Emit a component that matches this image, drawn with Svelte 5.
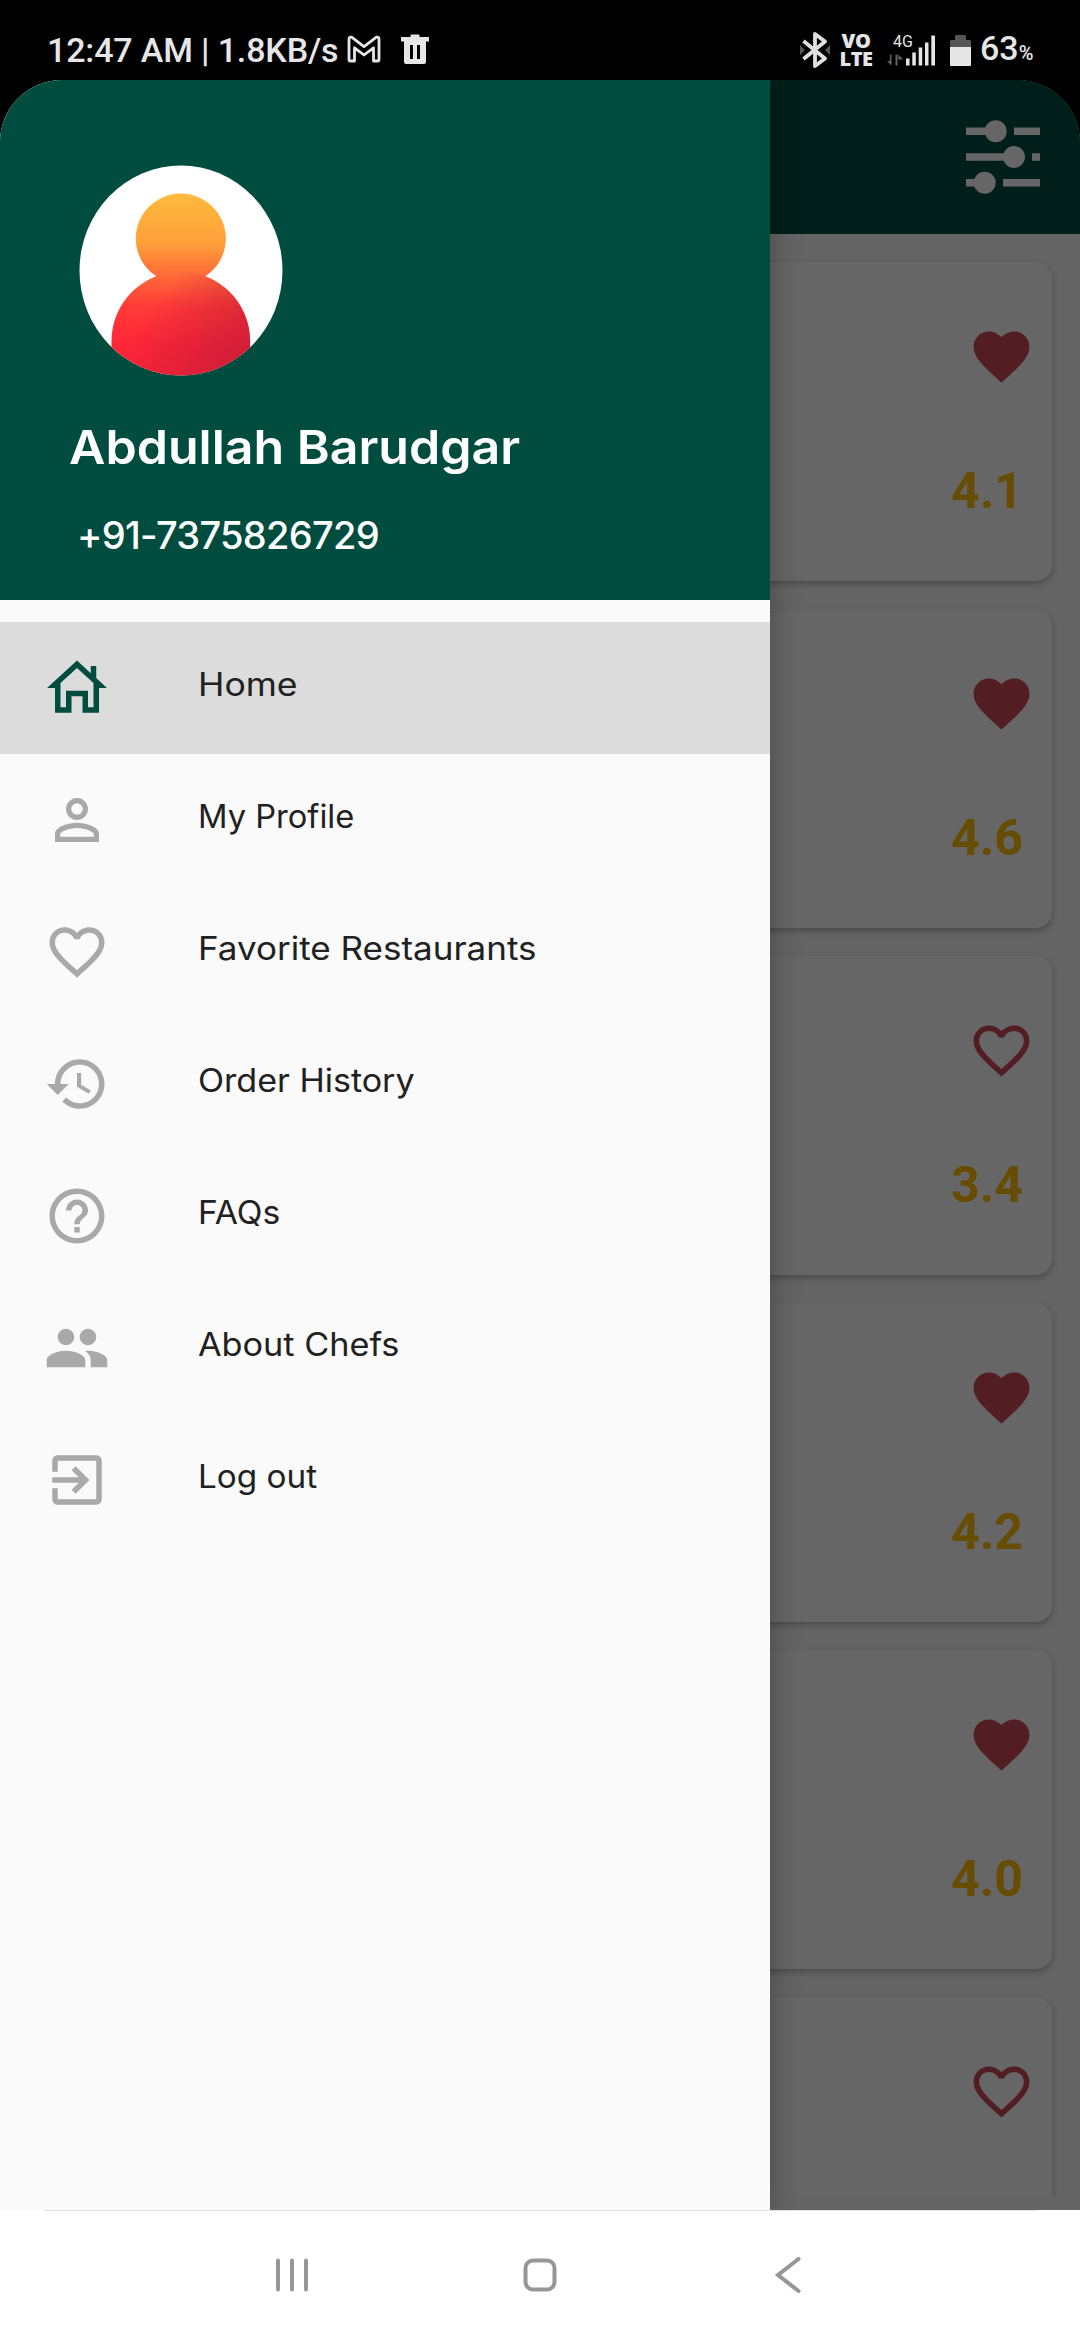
<script>
  const HEART_OUTLINE = 'M16.5 3c-1.74 0-3.41.81-4.5 2.09C10.91 3.81 9.24 3 7.5 3 4.42 3 2 5.42 2 8.5c0 3.78 3.4 6.86 8.55 11.54L12 21.35l1.45-1.32C18.6 15.36 22 12.28 22 8.5 22 5.42 19.58 3 16.5 3zm-4.4 15.55l-.1.1-.1-.1C7.14 14.24 4 11.39 4 8.5 4 6.5 5.5 5 7.5 5c1.54 0 3.04.99 3.57 2.36h1.87C13.46 5.99 14.96 5 16.5 5c2 0 3.5 1.5 3.5 3.5 0 2.89-3.14 5.74-7.9 10.05z';
  const HEART = 'M12 21.35l-1.45-1.32C5.4 15.36 2 12.28 2 8.5 2 5.42 4.42 3 7.5 3c1.74 0 3.41.81 4.5 2.09C13.09 3.81 14.76 3 16.5 3 19.58 3 22 5.42 22 8.5c0 3.78-3.4 6.86-8.55 11.54L12 21.35z';

  // `stretch` widens each label's letterforms horizontally
  const menu = [
    { label: 'Home', stretch: 1.11, active: true, icon: 'M12 2 1.1 12H4v9h6v-6h4v6h6v-9h2.9L19 8.4V4h-2v2.6zM12 4.7l6 5.45V19h-2v-6H8v6H6v-8.85z' },
    { label: 'My Profile', stretch: 1.02, icon: 'M12 5.9a2.1 2.1 0 110 4.2 2.1 2.1 0 010-4.2m0 9c2.97 0 6.1 1.46 6.1 2.1v1.1H5.9V17c0-.64 3.13-2.1 6.1-2.1M12 4C9.79 4 8 5.79 8 8s1.79 4 4 4 4-1.79 4-4-1.79-4-4-4zm0 9c-2.67 0-8 1.34-8 4v3h16v-3c0-2.66-5.33-4-8-4z' },
    { label: 'Favorite Restaurants', stretch: 1.094, icon: HEART_OUTLINE },
    { label: 'Order History', stretch: 1.064, icon: 'M13 3c-4.97 0-9 4.03-9 9H1l3.89 3.89.07.14L9 12H6c0-3.87 3.13-7 7-7s7 3.13 7 7-3.13 7-7 7c-1.93 0-3.68-.79-4.94-2.06l-1.42 1.42C8.27 19.99 10.51 21 13 21c4.97 0 9-4.03 9-9s-4.03-9-9-9zm-1 5v5l4.28 2.54.72-1.21-3.5-2.08V8H12z' },
    { label: 'FAQs', stretch: 1.05, icon: 'M11 18h2v-2h-2v2zm1-16C6.48 2 2 6.48 2 12s4.48 10 10 10 10-4.48 10-10S17.52 2 12 2zm0 18c-4.41 0-8-3.59-8-8s3.59-8 8-8 8 3.59 8 8-3.59 8-8 8zm0-14c-2.21 0-4 1.79-4 4h2c0-1.1.9-2 2-2s2 .9 2 2c0 2-3 1.75-3 5h2c0-2.25 3-2.5 3-5 0-2.21-1.79-4-4-4z' },
    { label: 'About Chefs', stretch: 1.07, icon: 'M16 11c1.66 0 2.99-1.34 2.99-3S17.66 5 16 5c-1.66 0-3 1.34-3 3s1.34 3 3 3zm-8 0c1.66 0 2.99-1.34 2.99-3S9.66 5 8 5C6.34 5 5 6.34 5 8s1.34 3 3 3zm0 2c-2.33 0-7 1.17-7 3.5V19h14v-2.5c0-2.33-4.67-3.5-7-3.5zm8 0c-.29 0-.62.02-.97.05 1.16.84 1.97 1.97 1.97 3.45V19h6v-2.5c0-2.33-4.67-3.5-7-3.5z' },
    { label: 'Log out', stretch: 1.04, icon: 'M10.09 15.59L11.5 17l5-5-5-5-1.41 1.41L12.67 11H3v2h9.67l-2.58 2.59zM19 3H5c-1.11 0-2 .9-2 2v4h2V5h14v14H5v-4H3v4c0 1.1.89 2 2 2h14c1.1 0 2-.9 2-2V5c0-1.1-.9-2-2-2z' }
  ];

  const restaurants = [
    { rating: '4.1', liked: true },
    { rating: '4.6', liked: true },
    { rating: '3.4', liked: false },
    { rating: '4.2', liked: true },
    { rating: '4.0', liked: true },
    { rating: '', liked: false }
  ];
</script>

<div class="phone">
  <header class="status">
    <span class="clock">12:47 AM | 1.8KB/s</span>
    <svg class="gmail" width="34" height="28" viewBox="0 0 34 28">
      <path d="M2 24.5V4.2Q2 1.5 4.6 2.2L17 11.6 29.4 2.2Q32 1.500 32 4.200V24.500Q32 26 30.500 26H26.500V12.800L17 20 7.500 12.800V26H3.500Q2 26 2 24.500Z" fill="none" stroke="#e6e6e6" stroke-width="2.800" stroke-linejoin="round" />
    </svg>
    <svg class="trash" width="28" height="31" viewBox="0 0 28 31">
      <path fill-rule="evenodd" fill="#e6e6e6" d="M0 3h9.500V1.500Q9.500.5 10.500.5h7q1 0 1 1V3H28v4.500H25V28q0 2-2 2H5q-2 0-2-2V7.500H0zM9 11v14h3V11zm7 0v14h3V11z" />
    </svg>
    <div class="right">
      <svg width="30" height="38" viewBox="0 0 30 38">
        <path d="M0 14l5 5-5 5zM30 14l-5 5 5 5z" fill="#555" />
        <path d="M3.500 10 25 27.500 15 35V3L25 10.500 3.500 28" fill="none" stroke="#e0e0e0" stroke-width="3.800" stroke-linejoin="round" />
      </svg>
      <div class="volte">VO<br />LTE</div>
      <div class="signal">
        <span class="net">4G</span>
        <svg width="50" height="32" viewBox="0 0 50 32">
          <path d="M4.500 20.500v11L0 27h3v-6.500zM8.500 31.500v-11h2V31.500zM11.500 20.500l4.500 5h-4.500z" fill="#666" />
          <path d="M19 24.500h3.500V31.500H19zM25.300 18.500h3.500v13h-3.500zM31.700 13.500h3.500v18h-3.500zM38 8.500h3.500v23H38zM44.300 1.500h3.700v30h-3.700z" fill="#e6e6e6" />
        </svg>
      </div>
      <svg class="battery" width="21" height="32" viewBox="0 0 21 32">
        <path d="M5 2q0-1 1-1h9q1 0 1 1v4h4q1 0 1 1v6H0V7q0-1 1-1h4z" fill="#555" />
        <path d="M0 13h21v18q0 1-1 1H1q-1 0-1-1z" fill="#e6e6e6" />
      </svg>
      <span class="pct">63<small>%</small></span>
    </div>
  </header>

  <main class="screen">
    <div class="toolbar">
      <svg width="74" height="74" viewBox="0 0 74 74" fill="#666">
        <path d="M0 7.500h30V15H0zM48 7.500h26V15H48zM0 33.200h48v7.500H0zM66 33.200h8v7.500h-8zM0 59h19v7.500H0zM37 59h37v7.500H37z" />
        <circle cx="29.700" cy="11.200" r="11" /><circle cx="48" cy="37" r="11" /><circle cx="18.700" cy="62.700" r="11" />
      </svg>
    </div>
    <div class="list">
      {#each restaurants as r}
        <article class="card">
          <svg class="like" viewBox="0 0 24 24"><path d={r.liked ? HEART : HEART_OUTLINE} /></svg>
          <span class="rating">{r.rating}</span>
        </article>
      {/each}
    </div>

    <aside class="drawer">
      <div class="profile">
        <svg class="avatar" width="204" height="211" viewBox="0 0 204 211">
          <defs>
            <linearGradient id="skin" x1="0" y1="28" x2="0" y2="180" gradientUnits="userSpaceOnUse">
              <stop offset="0" stop-color="#ffbb3d" /><stop offset=".33" stop-color="#ff9f3a" />
              <stop offset=".55" stop-color="#ff6838" /><stop offset=".75" stop-color="#ff3a38" />
              <stop offset="1" stop-color="#ff2638" />
            </linearGradient>
            <linearGradient id="shade" x1="92" y1="118" x2="172" y2="182" gradientUnits="userSpaceOnUse">
              <stop offset="0" stop-color="#b81838" stop-opacity="0" /><stop offset="1" stop-color="#b81838" stop-opacity=".65" />
            </linearGradient>
            <clipPath id="round"><ellipse cx="102" cy="105.500" rx="101.500" ry="105" /></clipPath>
          </defs>
          <g clip-path="url(#round)">
            <rect width="204" height="211" fill="#fff" />
            <g fill="url(#skin)">
              <path d="M32.500 211v-35a69.300 69.300 0 01138.600 0v35z" />
              <circle cx="101.800" cy="73.500" r="45" />
            </g>
            <path d="M32.500 211v-35a69.300 69.300 0 01138.600 0v35z" fill="url(#shade)" />
          </g>
        </svg>
        <div class="name">Abdullah Barudgar</div>
        <div class="tel">+91-7375826729</div>
      </div>
      <nav class="menu">
        {#each menu as item}
          <div class="item" class:active={item.active}>
            <svg viewBox="0 0 24 24"><path fill-rule="evenodd" d={item.icon} /></svg>
            <span style:transform="scaleX({item.stretch})">{item.label}</span>
          </div>
        {/each}
      </nav>
    </aside>
  </main>

  <footer class="navbar">
    <hr />
    <div class="keys">
      <svg width="34" height="36" viewBox="0 0 34 36"><path d="M3 3.500v29M17 3.500v29M31 3.500v29" /></svg>
      <svg width="34" height="36" viewBox="0 0 34 36"><rect x="2.500" y="3.500" width="29" height="29" rx="7.500" /></svg>
      <svg width="34" height="36" viewBox="0 0 34 36"><path d="M27.500 2 7 18l20.500 16" /></svg>
    </div>
  </footer>
</div>

<style>
  :global(body) { background: #000; }
  .phone { width: 1080px; height: 2340px; display: flex; flex-direction: column; background: #000; overflow: hidden; font-family: Roboto, sans-serif; }
  .phone * { box-sizing: border-box; }
  svg { display: block; flex: none; }

  .status { height: 80px; display: flex; align-items: center; padding: 20px 46px 0 47px; color: #e6e6e6; white-space: nowrap; }
  .clock { font-size: 34px; font-weight: 500; line-height: 40px; width: 300px; letter-spacing: -0.15px; }
  .gmail { margin-bottom: 3px; }
  .trash { margin: 0 0 2px 20px; }
  .right { margin-left: auto; display: flex; align-items: center; }
  .volte { width: 36px; margin-left: 8px; text-align: center; font: 800 20px/18px "Open Sans", sans-serif; letter-spacing: -0.5px; }
  .signal { display: grid; margin-left: 13px; }
  .signal > * { grid-area: 1 / 1; }
  .net { font-size: 16px; line-height: 16px; padding-left: 6px; }
  .battery { margin-left: 13px; }
  .pct { font-size: 34px; font-weight: 500; line-height: 40px; margin-left: 9px; width: 54px; }
  .pct small { font-size: 20px; }

  .screen { position: relative; height: 2130px; border-radius: 62px 62px 0 0; background: #646464; overflow: hidden; display: flex; flex-direction: column; }
  .toolbar { height: 154px; flex: none; background: #001f1a; display: flex; justify-content: flex-end; align-items: center; padding: 0 40px 0 0; }
  .list { height: 1962px; overflow: hidden; display: flex; flex-direction: column; gap: 28px; padding: 28px; }
  .card { height: 319px; flex: none; border-radius: 16px; background: #666; box-shadow: 0 3px 6px rgba(0, 0, 0, 0.25); display: flex; flex-direction: column; align-items: flex-end; padding: 61px 17px 0 0; }
  .like { width: 67px; height: 67px; fill: #521e23; }
  .rating { width: 84px; margin-top: 71px; font-size: 50px; line-height: 60px; font-weight: 700; color: #664d03; }

  .drawer { position: absolute; left: 0; top: 0; width: 770px; height: 2130px; background: #fafafa; box-shadow: 0 0 28px rgba(0, 0, 0, 0.3); font-family: Inter, sans-serif; }
  .profile { height: 520px; background: #004d40; color: #fff; padding: 85px 0 0 69px; white-space: nowrap; }
  .avatar { margin-left: 10px; }
  .name { width: max-content; margin-top: 41px; font-size: 47px; line-height: 60px; font-weight: 600; transform: scaleX(1.065); transform-origin: left; }
  .tel { margin: 33px 0 0 8px; font-size: 38px; line-height: 50px; font-weight: 500; letter-spacing: -0.7px; }
  .menu { padding-top: 22px; }
  .item { height: 132px; display: flex; align-items: center; gap: 88px; padding-left: 44px; font-size: 32px; color: #212121; }
  .item svg { width: 66px; height: 66px; fill: #a9a9a9; }
  .item span { margin-bottom: 7px; transform-origin: left; }
  .item.active { background: #dcdcdc; }
  .item.active svg { fill: #004d40; }

  .navbar { height: 130px; background: #fff; }
  .navbar hr { height: 1px; margin: 0 44px; border: 0; background: #e2e2e2; }
  .keys { height: 127px; display: flex; justify-content: center; align-items: center; gap: 214px; }
  .keys svg { fill: none; stroke: #969696; stroke-width: 4; stroke-linecap: round; }
</style>
